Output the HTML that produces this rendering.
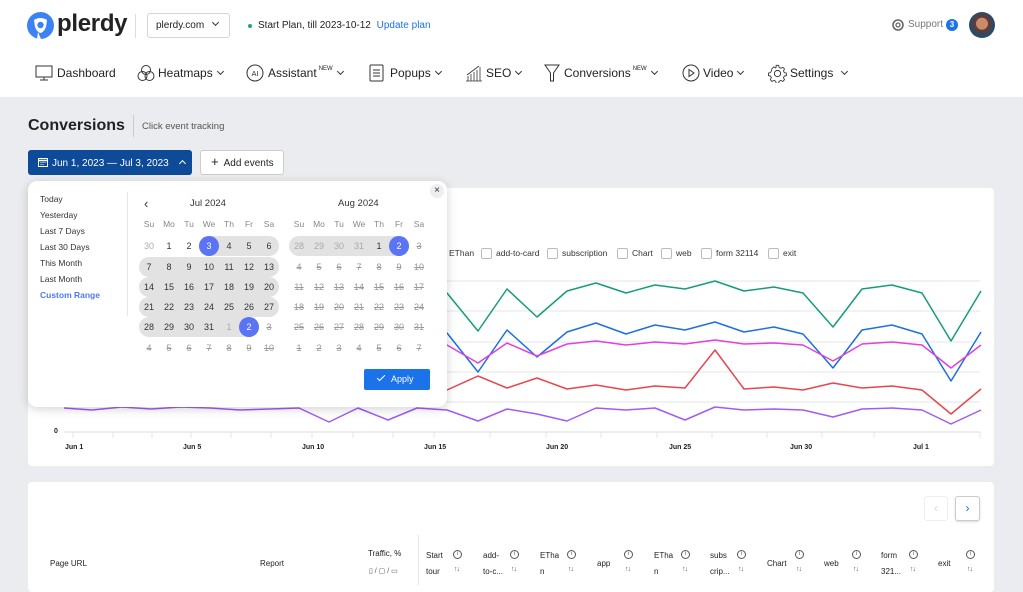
<!DOCTYPE html>
<html><head><meta charset="utf-8"><style>
*{box-sizing:border-box;margin:0;padding:0}
body{width:1023px;height:580px;overflow:hidden;background:#ebecef;font-family:"Liberation Sans",sans-serif;color:#222;position:relative}
.a{position:absolute;white-space:nowrap}
.hdr{position:absolute;left:0;top:0;width:1023px;height:97px;background:#fff}
.nav{font-size:12px;color:#222;top:66px;font-weight:500}
.chev{display:inline-block;width:5px;height:5px;border-right:1.2px solid #333;border-bottom:1.2px solid #333;transform:rotate(45deg);margin-left:5px;position:relative;top:-3px}
.sup{font-size:6px;vertical-align:top;margin-left:2px}
.card{position:absolute;background:#fff;border-radius:4px}
.pre{position:absolute;left:40px;font-size:8.5px;color:#333}
.c{position:absolute;width:20px;text-align:center;font-size:9px;color:#333;line-height:20px;height:20px}
.g{color:#aaa}
.s{color:#999;text-decoration:line-through}
.h{color:#888;font-size:8.5px}
.pill{position:absolute;height:20px;background:#e2e2e2;border-radius:10px}
.sel{position:absolute;width:20px;height:20px;border-radius:50%;background:#5b73f5}
.w{color:#fff}
.th{position:absolute;font-size:8px;color:#222;line-height:16px}
.info{position:absolute;width:9px;height:9px;border:1px solid #555;border-radius:50%;font-size:6px;line-height:7px;text-align:center;color:#555}
.ar{position:absolute;font-size:7px;color:#555;letter-spacing:-1px}
.cb{display:inline-block;width:11px;height:11px;border:1px solid #bbb;border-radius:2px;vertical-align:middle;margin-right:4px}
.lg{position:absolute;top:248px;font-size:8.5px;color:#333}
.xl{position:absolute;top:444px;font-size:7px;color:#222;font-weight:bold}
</style></head><body>
<div class="hdr"></div>
<svg class="a" style="left:27px;top:12px" width="27" height="27" viewBox="0 0 27 27"><circle cx="13.5" cy="13.5" r="13.5" fill="#3b82f6"/><path d="M7 8 Q13.5 4 20 8 L19 15 Q17 20 13.5 21 Q10 20 8 15 Z" fill="#fff"/><circle cx="13.5" cy="13" r="3.2" fill="#3b82f6"/><path d="M11 20 L10 27 L14 27 Z" fill="#fff"/></svg>
<div class="a" style="left:57px;top:10px;font-size:24px;font-weight:bold;color:#222;letter-spacing:-0.3px">plerdy</div>
<div class="a" style="left:135px;top:14px;width:1px;height:24px;background:#ddd"></div>
<div class="a" style="left:147px;top:13px;width:83px;height:25px;border:1px solid #d5d5d5;border-radius:3px;font-size:10px;padding:6px 0 0 8px;color:#222">plerdy.com <span class="chev" style="margin-left:6px"></span></div>
<div class="a" style="left:248px;top:24px;width:4px;height:4px;border-radius:50%;background:#20a67a"></div>
<div class="a" style="left:258px;top:20px;font-size:10px;color:#222">Start Plan, till 2023-10-12 <span style="color:#1a73e8;margin-left:3px">Update plan</span></div>
<svg class="a" style="left:892px;top:19px" width="12" height="12" viewBox="0 0 12 12"><circle cx="6" cy="6" r="5" fill="none" stroke="#666" stroke-width="1.6"/><circle cx="6" cy="6" r="2" fill="none" stroke="#666" stroke-width="1.3"/></svg>
<div class="a" style="left:908px;top:19px;font-size:10px;color:#777">Support</div>
<div class="a" style="left:946px;top:19px;width:12px;height:12px;border-radius:50%;background:#1a73e8;color:#fff;font-size:8px;text-align:center;line-height:12px;font-weight:bold">3</div>
<div class="a" style="left:969px;top:12px;width:26px;height:26px;border-radius:50%;background:radial-gradient(circle at 50% 45%,#c98b6b 0 30%,#6b3a2a 32%,#2a4a6a 60%)"></div>
<svg class="a" style="left:35px;top:65px" width="18" height="16" viewBox="0 0 18 16"><rect x="1" y="1" width="16" height="11" fill="none" stroke="#333" stroke-width="1"/><path d="M5 15h8M9 12v3" stroke="#333"/></svg>
<div class="a nav" style="left:57px">Dashboard</div>
<svg class="a" style="left:137px;top:64px" width="18" height="18" viewBox="0 0 18 18" fill="none" stroke="#333"><circle cx="9" cy="6" r="4.5"/><circle cx="5.5" cy="12" r="4.5"/><circle cx="12.5" cy="12" r="4.5"/></svg>
<div class="a nav" style="left:158px">Heatmaps<span class="chev"></span></div>
<svg class="a" style="left:246px;top:64px" width="18" height="18" viewBox="0 0 18 18"><circle cx="9" cy="9" r="8" fill="none" stroke="#333"/><text x="9" y="12" font-size="7.5" text-anchor="middle" font-family="Liberation Sans" fill="#333">AI</text></svg>
<div class="a nav" style="left:268px">Assistant<span class="sup">NEW</span><span class="chev"></span></div>
<svg class="a" style="left:369px;top:64px" width="15" height="18" viewBox="0 0 15 18" fill="none" stroke="#333"><rect x="1" y="1" width="13" height="16" rx="1"/><path d="M4 6h7M4 9h7M4 12h7"/></svg>
<div class="a nav" style="left:390px">Popups<span class="chev"></span></div>
<svg class="a" style="left:465px;top:64px" width="18" height="18" viewBox="0 0 18 18" fill="none" stroke="#333" stroke-width=".8"><path d="M1 17h16M3 17v-5M6 17v-7M9 17v-9M12 17v-11M15 17v-14M2 11l12-9"/></svg>
<div class="a nav" style="left:486px">SEO<span class="chev"></span></div>
<svg class="a" style="left:544px;top:64px" width="16" height="18" viewBox="0 0 16 18" fill="none" stroke="#333"><path d="M1 1h14L9.5 9v8h-3V9Z"/></svg>
<div class="a nav" style="left:564px">Conversions<span class="sup">NEW</span><span class="chev"></span></div>
<svg class="a" style="left:682px;top:64px" width="18" height="18" viewBox="0 0 18 18" fill="none" stroke="#333"><circle cx="9" cy="9" r="8"/><path d="M7 5.5l5 3.5-5 3.5Z"/></svg>
<div class="a nav" style="left:703px">Video<span class="chev"></span></div>
<svg class="a" style="left:768px;top:64px" width="19" height="19" viewBox="0 0 20 20" fill="none" stroke="#333"><path d="M8.5 1.5h3l.5 2.5 2 1 2.3-1.2 2 2-1.2 2.3 1 2 2.4.5v3l-2.4.5-1 2 1.2 2.3-2 2-2.3-1.2-2 1-.5 2.4h-3l-.5-2.4-2-1-2.3 1.2-2-2 1.2-2.3-1-2-2.4-.5v-3l2.4-.5 1-2L3.7 5.4l2-2L8 4.6l.5-.5Z" transform="scale(.9) translate(1 0)"/><circle cx="10" cy="10" r="3.3"/></svg>
<div class="a nav" style="left:790px">Settings<span class="chev" style="margin-left:9px"></span></div>

<div class="a" style="left:28px;top:117px;font-size:16px;font-weight:bold;color:#222">Conversions</div>
<div class="a" style="left:133px;top:115px;width:1px;height:22px;background:#ccc"></div>
<div class="a" style="left:142px;top:121px;font-size:9.5px;color:#555">Click event tracking</div>
<div class="a" style="left:28px;top:150px;width:164px;height:25px;background:#0d4a97;border-radius:3px;color:#fff;font-size:10px;padding:7px 0 0 10px">
<svg width="10" height="10" viewBox="0 0 10 10" style="vertical-align:-1px;margin-right:4px"><rect x=".5" y="1.5" width="9" height="8" fill="none" stroke="#fff"/><path d="M.5 3.5h9" stroke="#fff" stroke-width="1.5"/><path d="M2.5 5.5h1M4.5 5.5h1M6.5 5.5h1M2.5 7.5h1M4.5 7.5h1" stroke="#fff"/></svg>Jun 1, 2023 — Jul 3, 2023 <span style="display:inline-block;width:5px;height:5px;border-left:1.5px solid #fff;border-top:1.5px solid #fff;transform:rotate(45deg);margin-left:8px;position:relative;top:0"></span></div>
<div class="a" style="left:200px;top:150px;width:84px;height:25px;background:#fff;border:1px solid #ccc;border-radius:3px;font-size:10px;padding:6px 0 0 10px;color:#222"><span style="font-size:13px;line-height:10px">+</span>&nbsp; Add events</div>

<div class="card" style="left:28px;top:188px;width:966px;height:278px"></div>
<div class="lg" style="left:449px">EThan</div>
<div class="lg" style="left:481px"><span class="cb"></span>add-to-card</div>
<div class="lg" style="left:547px"><span class="cb"></span>subscription</div>
<div class="lg" style="left:617px"><span class="cb"></span>Chart</div>
<div class="lg" style="left:661px"><span class="cb"></span>web</div>
<div class="lg" style="left:701px"><span class="cb"></span>form 32114</div>
<div class="lg" style="left:768px"><span class="cb"></span>exit</div>
<svg class="a" style="left:0;top:0" width="1023" height="470">
<g stroke="#e6e6e6" stroke-width="1"><path d="M64 281H980M64 311H980M64 342H980M64 372H980M64 402H980"/><path d="M64 432H980" stroke="#ddd"/>
<path d="M73 432v6M113 432v6M152 432v6M191 432v6M231 432v6M271 432v6M312 432v6M353 432v6M393 432v6M434 432v6M490 432v6M546 432v6M601 432v6M657 432v6M712 432v6M767 432v6M822 432v6M874 432v6M980 432v6"/></g>
<g fill="none" stroke-width="1.5" stroke-linejoin="round">
<polyline stroke="#169c7c" points="417,300 447,293 478,331 507,289 537,317 567,291 596,283 626,293 655,285 685,289 715,281 744,291 774,287 803,293 833,327 862,289 892,285 922,293 951,341 981,291"/>
<polyline stroke="#1d6fe0" points="417,320 447,333 478,372 507,330 537,357 567,332 596,323 626,334 655,325 685,330 715,322 744,332 774,327 803,334 833,368 862,330 892,325 922,334 951,381 981,332"/>
<polyline stroke="#e040e0" points="417,340 447,345 478,363 507,343 537,356 567,344 596,341 626,345 655,342 685,344 715,340 744,344 774,343 803,345 833,361 862,344 892,342 922,345 951,368 981,345"/>
<polyline stroke="#e8454f" points="417,395 447,390 478,376 507,388 537,378 567,389 596,385 626,390 655,386 685,388 715,350 744,389 774,387 803,390 833,383 862,388 892,386 922,390 951,414 981,389"/>
<polyline stroke="#a05cf5" points="64,408 92,410 122,407 151,409 181,407 210,408 240,410 270,409 299,408 329,422 358,408 388,420 417,408 447,410 478,421 507,409 537,414 567,421 596,408 626,410 655,408 685,420 715,407 744,410 774,409 803,410 833,417 862,409 892,408 922,410 951,424 981,410"/>
</g></svg>
<div class="a" style="left:54px;top:428px;font-size:7px;font-weight:bold">0</div>
<div class="xl" style="left:65px">Jun 1</div><div class="xl" style="left:183px">Jun 5</div><div class="xl" style="left:302px">Jun 10</div><div class="xl" style="left:424px">Jun 15</div><div class="xl" style="left:546px">Jun 20</div><div class="xl" style="left:669px">Jun 25</div><div class="xl" style="left:790px">Jun 30</div><div class="xl" style="left:913px">Jul 1</div>

<div class="a" style="left:28px;top:181px;width:419px;height:226px;background:#fff;border-radius:9px;box-shadow:0 2px 10px rgba(0,0,0,.18)"></div>
<div class="a" style="left:430px;top:184px;width:14px;height:14px;border-radius:50%;background:#eee;font-size:10px;text-align:center;line-height:14px;color:#333">×</div>
<div class="pre" style="top:194px">Today</div><div class="pre" style="top:210px">Yesterday</div><div class="pre" style="top:226px">Last 7 Days</div><div class="pre" style="top:242px">Last 30 Days</div><div class="pre" style="top:258px">This Month</div><div class="pre" style="top:274px">Last Month</div><div class="pre" style="top:290px;color:#4a7bf5;font-weight:bold">Custom Range</div>
<div class="a" style="left:127px;top:192px;width:1px;height:124px;background:#e5e5e5"></div>
<div class="a" style="left:144px;top:196px;font-size:13px;color:#333">‹</div>
<div class="a" style="left:190px;top:198px;font-size:9.5px;color:#333">Jul 2024</div>
<div class="a" style="left:338px;top:198px;font-size:9.5px;color:#333">Aug 2024</div>
<div class="pill" style="left:199px;top:236px;width:80px"></div>
<div class="pill" style="left:139px;top:257px;width:140px"></div>
<div class="pill" style="left:139px;top:277px;width:140px"></div>
<div class="pill" style="left:139px;top:297px;width:140px"></div>
<div class="pill" style="left:139px;top:317px;width:120px"></div>
<div class="pill" style="left:289px;top:236px;width:120px"></div>
<div class="sel" style="left:199px;top:236px"></div><div class="sel" style="left:239px;top:317px"></div><div class="sel" style="left:389px;top:236px"></div>
<div class="c h" style="left:139px;top:214px">Su</div><div class="c h" style="left:159px;top:214px">Mo</div><div class="c h" style="left:179px;top:214px">Tu</div><div class="c h" style="left:199px;top:214px">We</div><div class="c h" style="left:219px;top:214px">Th</div><div class="c h" style="left:239px;top:214px">Fr</div><div class="c h" style="left:259px;top:214px">Sa</div>
<div class="c h" style="left:289px;top:214px">Su</div><div class="c h" style="left:309px;top:214px">Mo</div><div class="c h" style="left:329px;top:214px">Tu</div><div class="c h" style="left:349px;top:214px">We</div><div class="c h" style="left:369px;top:214px">Th</div><div class="c h" style="left:389px;top:214px">Fr</div><div class="c h" style="left:409px;top:214px">Sa</div>
<div class="c g" style="left:139px;top:236px">30</div><div class="c" style="left:159px;top:236px">1</div><div class="c" style="left:179px;top:236px">2</div><div class="c w" style="left:199px;top:236px">3</div><div class="c" style="left:219px;top:236px">4</div><div class="c" style="left:239px;top:236px">5</div><div class="c" style="left:259px;top:236px">6</div>
<div class="c" style="left:139px;top:257px">7</div><div class="c" style="left:159px;top:257px">8</div><div class="c" style="left:179px;top:257px">9</div><div class="c" style="left:199px;top:257px">10</div><div class="c" style="left:219px;top:257px">11</div><div class="c" style="left:239px;top:257px">12</div><div class="c" style="left:259px;top:257px">13</div>
<div class="c" style="left:139px;top:277px">14</div><div class="c" style="left:159px;top:277px">15</div><div class="c" style="left:179px;top:277px">16</div><div class="c" style="left:199px;top:277px">17</div><div class="c" style="left:219px;top:277px">18</div><div class="c" style="left:239px;top:277px">19</div><div class="c" style="left:259px;top:277px">20</div>
<div class="c" style="left:139px;top:297px">21</div><div class="c" style="left:159px;top:297px">22</div><div class="c" style="left:179px;top:297px">23</div><div class="c" style="left:199px;top:297px">24</div><div class="c" style="left:219px;top:297px">25</div><div class="c" style="left:239px;top:297px">26</div><div class="c" style="left:259px;top:297px">27</div>
<div class="c" style="left:139px;top:317px">28</div><div class="c" style="left:159px;top:317px">29</div><div class="c" style="left:179px;top:317px">30</div><div class="c" style="left:199px;top:317px">31</div><div class="c g" style="left:219px;top:317px">1</div><div class="c w" style="left:239px;top:317px">2</div><div class="c s" style="left:259px;top:317px">3</div>
<div class="c s" style="left:139px;top:338px">4</div><div class="c s" style="left:159px;top:338px">5</div><div class="c s" style="left:179px;top:338px">6</div><div class="c s" style="left:199px;top:338px">7</div><div class="c s" style="left:219px;top:338px">8</div><div class="c s" style="left:239px;top:338px">9</div><div class="c s" style="left:259px;top:338px">10</div>
<div class="c g" style="left:289px;top:236px">28</div><div class="c g" style="left:309px;top:236px">29</div><div class="c g" style="left:329px;top:236px">30</div><div class="c g" style="left:349px;top:236px">31</div><div class="c" style="left:369px;top:236px">1</div><div class="c w" style="left:389px;top:236px">2</div><div class="c s" style="left:409px;top:236px">3</div>
<div class="c s" style="left:289px;top:257px">4</div><div class="c s" style="left:309px;top:257px">5</div><div class="c s" style="left:329px;top:257px">6</div><div class="c s" style="left:349px;top:257px">7</div><div class="c s" style="left:369px;top:257px">8</div><div class="c s" style="left:389px;top:257px">9</div><div class="c s" style="left:409px;top:257px">10</div>
<div class="c s" style="left:289px;top:277px">11</div><div class="c s" style="left:309px;top:277px">12</div><div class="c s" style="left:329px;top:277px">13</div><div class="c s" style="left:349px;top:277px">14</div><div class="c s" style="left:369px;top:277px">15</div><div class="c s" style="left:389px;top:277px">16</div><div class="c s" style="left:409px;top:277px">17</div>
<div class="c s" style="left:289px;top:297px">18</div><div class="c s" style="left:309px;top:297px">19</div><div class="c s" style="left:329px;top:297px">20</div><div class="c s" style="left:349px;top:297px">21</div><div class="c s" style="left:369px;top:297px">22</div><div class="c s" style="left:389px;top:297px">23</div><div class="c s" style="left:409px;top:297px">24</div>
<div class="c s" style="left:289px;top:317px">25</div><div class="c s" style="left:309px;top:317px">26</div><div class="c s" style="left:329px;top:317px">27</div><div class="c s" style="left:349px;top:317px">28</div><div class="c s" style="left:369px;top:317px">29</div><div class="c s" style="left:389px;top:317px">30</div><div class="c s" style="left:409px;top:317px">31</div>
<div class="c s" style="left:289px;top:338px">1</div><div class="c s" style="left:309px;top:338px">2</div><div class="c s" style="left:329px;top:338px">3</div><div class="c s" style="left:349px;top:338px">4</div><div class="c s" style="left:369px;top:338px">5</div><div class="c s" style="left:389px;top:338px">6</div><div class="c s" style="left:409px;top:338px">7</div>
<div class="a" style="left:364px;top:369px;width:66px;height:21px;background:#1a73e8;border-radius:2px;color:#fff;font-size:9px;line-height:21px;padding-left:13px"><span style="display:inline-block;width:8px;height:4px;border-left:1.3px solid #fff;border-bottom:1.3px solid #fff;transform:rotate(-45deg);position:relative;top:-3px;margin-right:6px"></span>Apply</div>

<div class="card" style="left:28px;top:482px;width:966px;height:110px"></div>
<div class="a" style="left:924px;top:496px;width:24px;height:25px;border:1px solid #eee;border-radius:3px;color:#cde;font-size:12px;text-align:center;line-height:22px">‹</div>
<div class="a" style="left:955px;top:496px;width:25px;height:25px;border:1px solid #ccc;border-radius:3px;color:#1a73e8;font-size:12px;text-align:center;line-height:22px;box-shadow:0 1px 2px rgba(0,0,0,.15)">›</div>
<div class="th" style="left:50px;top:556px">Page URL</div>
<div class="th" style="left:260px;top:556px">Report</div>
<div class="th" style="left:368px;top:546px">Traffic, %</div>
<div class="th" style="left:369px;top:564px;color:#555;font-size:7px">▯ / ▢ / ▭</div>
<div class="a" style="left:418px;top:535px;width:1px;height:50px;background:#e5e5e5"></div>
<div class="th" style="left:426px;top:548px">Start<br>tour</div>
<div class="th" style="left:483px;top:548px">add-<br>to-c...</div>
<div class="th" style="left:540px;top:548px">ETha<br>n</div>
<div class="th" style="left:597px;top:556px">app</div>
<div class="th" style="left:654px;top:548px">ETha<br>n</div>
<div class="th" style="left:710px;top:548px">subs<br>crip...</div>
<div class="th" style="left:767px;top:556px">Chart</div>
<div class="th" style="left:824px;top:556px">web</div>
<div class="th" style="left:881px;top:548px">form<br>321...</div>
<div class="th" style="left:938px;top:556px">exit</div>
<div class="info" style="left:453px;top:550px">i</div><div class="info" style="left:510px;top:550px">i</div><div class="info" style="left:567px;top:550px">i</div><div class="info" style="left:624px;top:550px">i</div><div class="info" style="left:681px;top:550px">i</div><div class="info" style="left:737px;top:550px">i</div><div class="info" style="left:795px;top:550px">i</div><div class="info" style="left:852px;top:550px">i</div><div class="info" style="left:909px;top:550px">i</div><div class="info" style="left:966px;top:550px">i</div>
<div class="ar" style="left:454px;top:566px">↑↓</div><div class="ar" style="left:511px;top:566px">↑↓</div><div class="ar" style="left:568px;top:566px">↑↓</div><div class="ar" style="left:625px;top:566px">↑↓</div><div class="ar" style="left:682px;top:566px">↑↓</div><div class="ar" style="left:738px;top:566px">↑↓</div><div class="ar" style="left:796px;top:566px">↑↓</div><div class="ar" style="left:853px;top:566px">↑↓</div><div class="ar" style="left:910px;top:566px">↑↓</div><div class="ar" style="left:967px;top:566px">↑↓</div>
</body></html>
